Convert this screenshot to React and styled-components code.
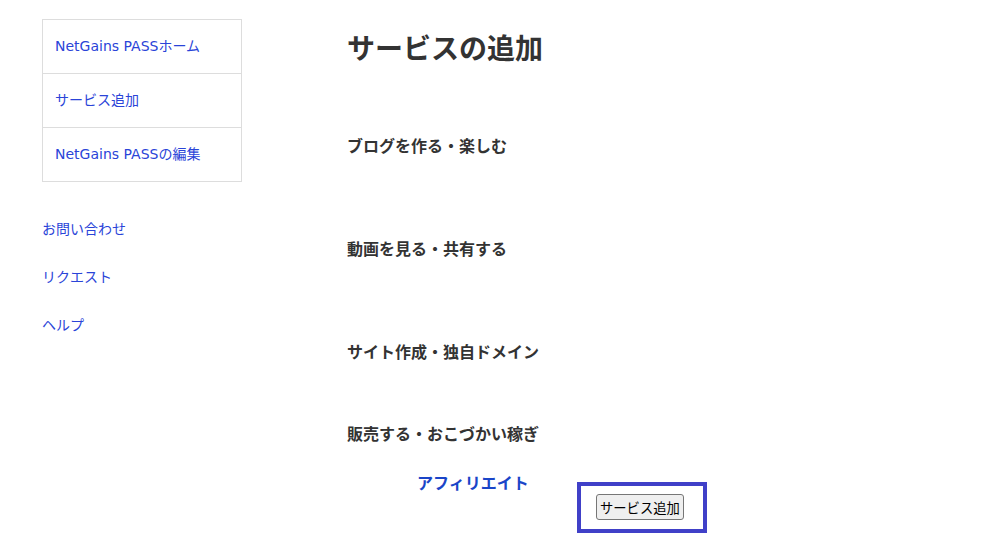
import React from "react";
import styled, { createGlobalStyle } from "styled-components";

const GlobalStyle = createGlobalStyle`
  body {
    margin: 0;
    background: #fff;
    font-family: "DejaVu Sans", "Noto Sans CJK JP", sans-serif;
    color: #333;
  }
`;

const sideMenu = ["NetGains PASSホーム", "サービス追加", "NetGains PASSの編集"];
const subLinks = ["お問い合わせ", "リクエスト", "ヘルプ"];

const sections = [
  { title: "ブログを作る・楽しむ", items: [], space: 79 },
  { title: "動画を見る・共有する", items: [], space: 79 },
  { title: "サイト作成・独自ドメイン", items: [], space: 58 },
  { title: "販売する・おこづかい稼ぎ", items: ["アフィリエイト"], space: 0 },
];

export default function App() {
  return (
    <>
      <GlobalStyle />
      <Page>
        <Sidebar>
          <MenuBox>
            {sideMenu.map((m) => (
              <MenuItem key={m}>
                <SideLink href="#">{m}</SideLink>
              </MenuItem>
            ))}
          </MenuBox>
          <SubList>
            {subLinks.map((l) => (
              <SubItem key={l}>
                <SideLink href="#">{l}</SideLink>
              </SubItem>
            ))}
          </SubList>
        </Sidebar>
        <Main>
          <Title>サービスの追加</Title>
          {sections.map((s) => (
            <Section key={s.title} $space={s.space}>
              <SectionTitle>{s.title}</SectionTitle>
              {s.items.map((it) => (
                <ServiceRow key={it}>
                  <ServiceName href="#">{it}</ServiceName>
                  <ButtonFrame>
                    <AddButton type="button">サービス追加</AddButton>
                  </ButtonFrame>
                </ServiceRow>
              ))}
            </Section>
          ))}
        </Main>
      </Page>
    </>
  );
}

const Page = styled.div`
  display: flex;
  align-items: flex-start;
  padding: 19px 0 0 42px;
`;

const Sidebar = styled.nav`
  width: 200px;
  flex-shrink: 0;
`;

const MenuBox = styled.ul`
  list-style: none;
  margin: 0;
  padding: 0;
  border: 1px solid #ddd;
`;

const MenuItem = styled.li`
  height: 53px;
  box-sizing: border-box;
  display: flex;
  align-items: center;
  padding: 0 0 4px 12px;
  & + & {
    height: 54px;
    border-top: 1px solid #ddd;
  }
`;

const SideLink = styled.a`
  color: #2a44d8;
  font-size: 14px;
  text-decoration: none;
`;

const SubList = styled.ul`
  list-style: none;
  margin: 37px 0 0;
  padding: 0;
`;

const SubItem = styled.li`
  height: 20px;
  line-height: 20px;
  margin-bottom: 28px;
`;

const Main = styled.main`
  margin-left: 105px;
  padding-top: 11px;
`;

const Title = styled.h1`
  margin: 0 0 65px;
  font-size: 28px;
  line-height: 40px;
  font-weight: bold;
  color: #333;
`;

const Section = styled.section`
  padding-bottom: ${(p) => p.$space}px;
`;

const SectionTitle = styled.h3`
  margin: 0;
  font-size: 16px;
  line-height: 24px;
  font-weight: bold;
  color: #333;
`;

const ServiceRow = styled.div`
  display: flex;
  align-items: flex-start;
  margin-top: 25px;
  padding-left: 70px;
`;

const ServiceName = styled.a`
  font-size: 16px;
  line-height: 24px;
  font-weight: bold;
  color: #1a45c8;
  text-decoration: none;
  width: 160px;
`;

const ButtonFrame = styled.div`
  margin-top: 10px;
  border: 4px solid #4040c8;
  padding: 8px 19px 9px 15px;
`;

const AddButton = styled.button`
  font-family: "DejaVu Sans", "Noto Sans CJK JP", sans-serif;
  font-size: 13.3px;
  height: 26px;
  padding: 1px 3px;
  color: #000;
  background: #efefef;
  border: 1px solid #767676;
  border-radius: 3px;
`;
